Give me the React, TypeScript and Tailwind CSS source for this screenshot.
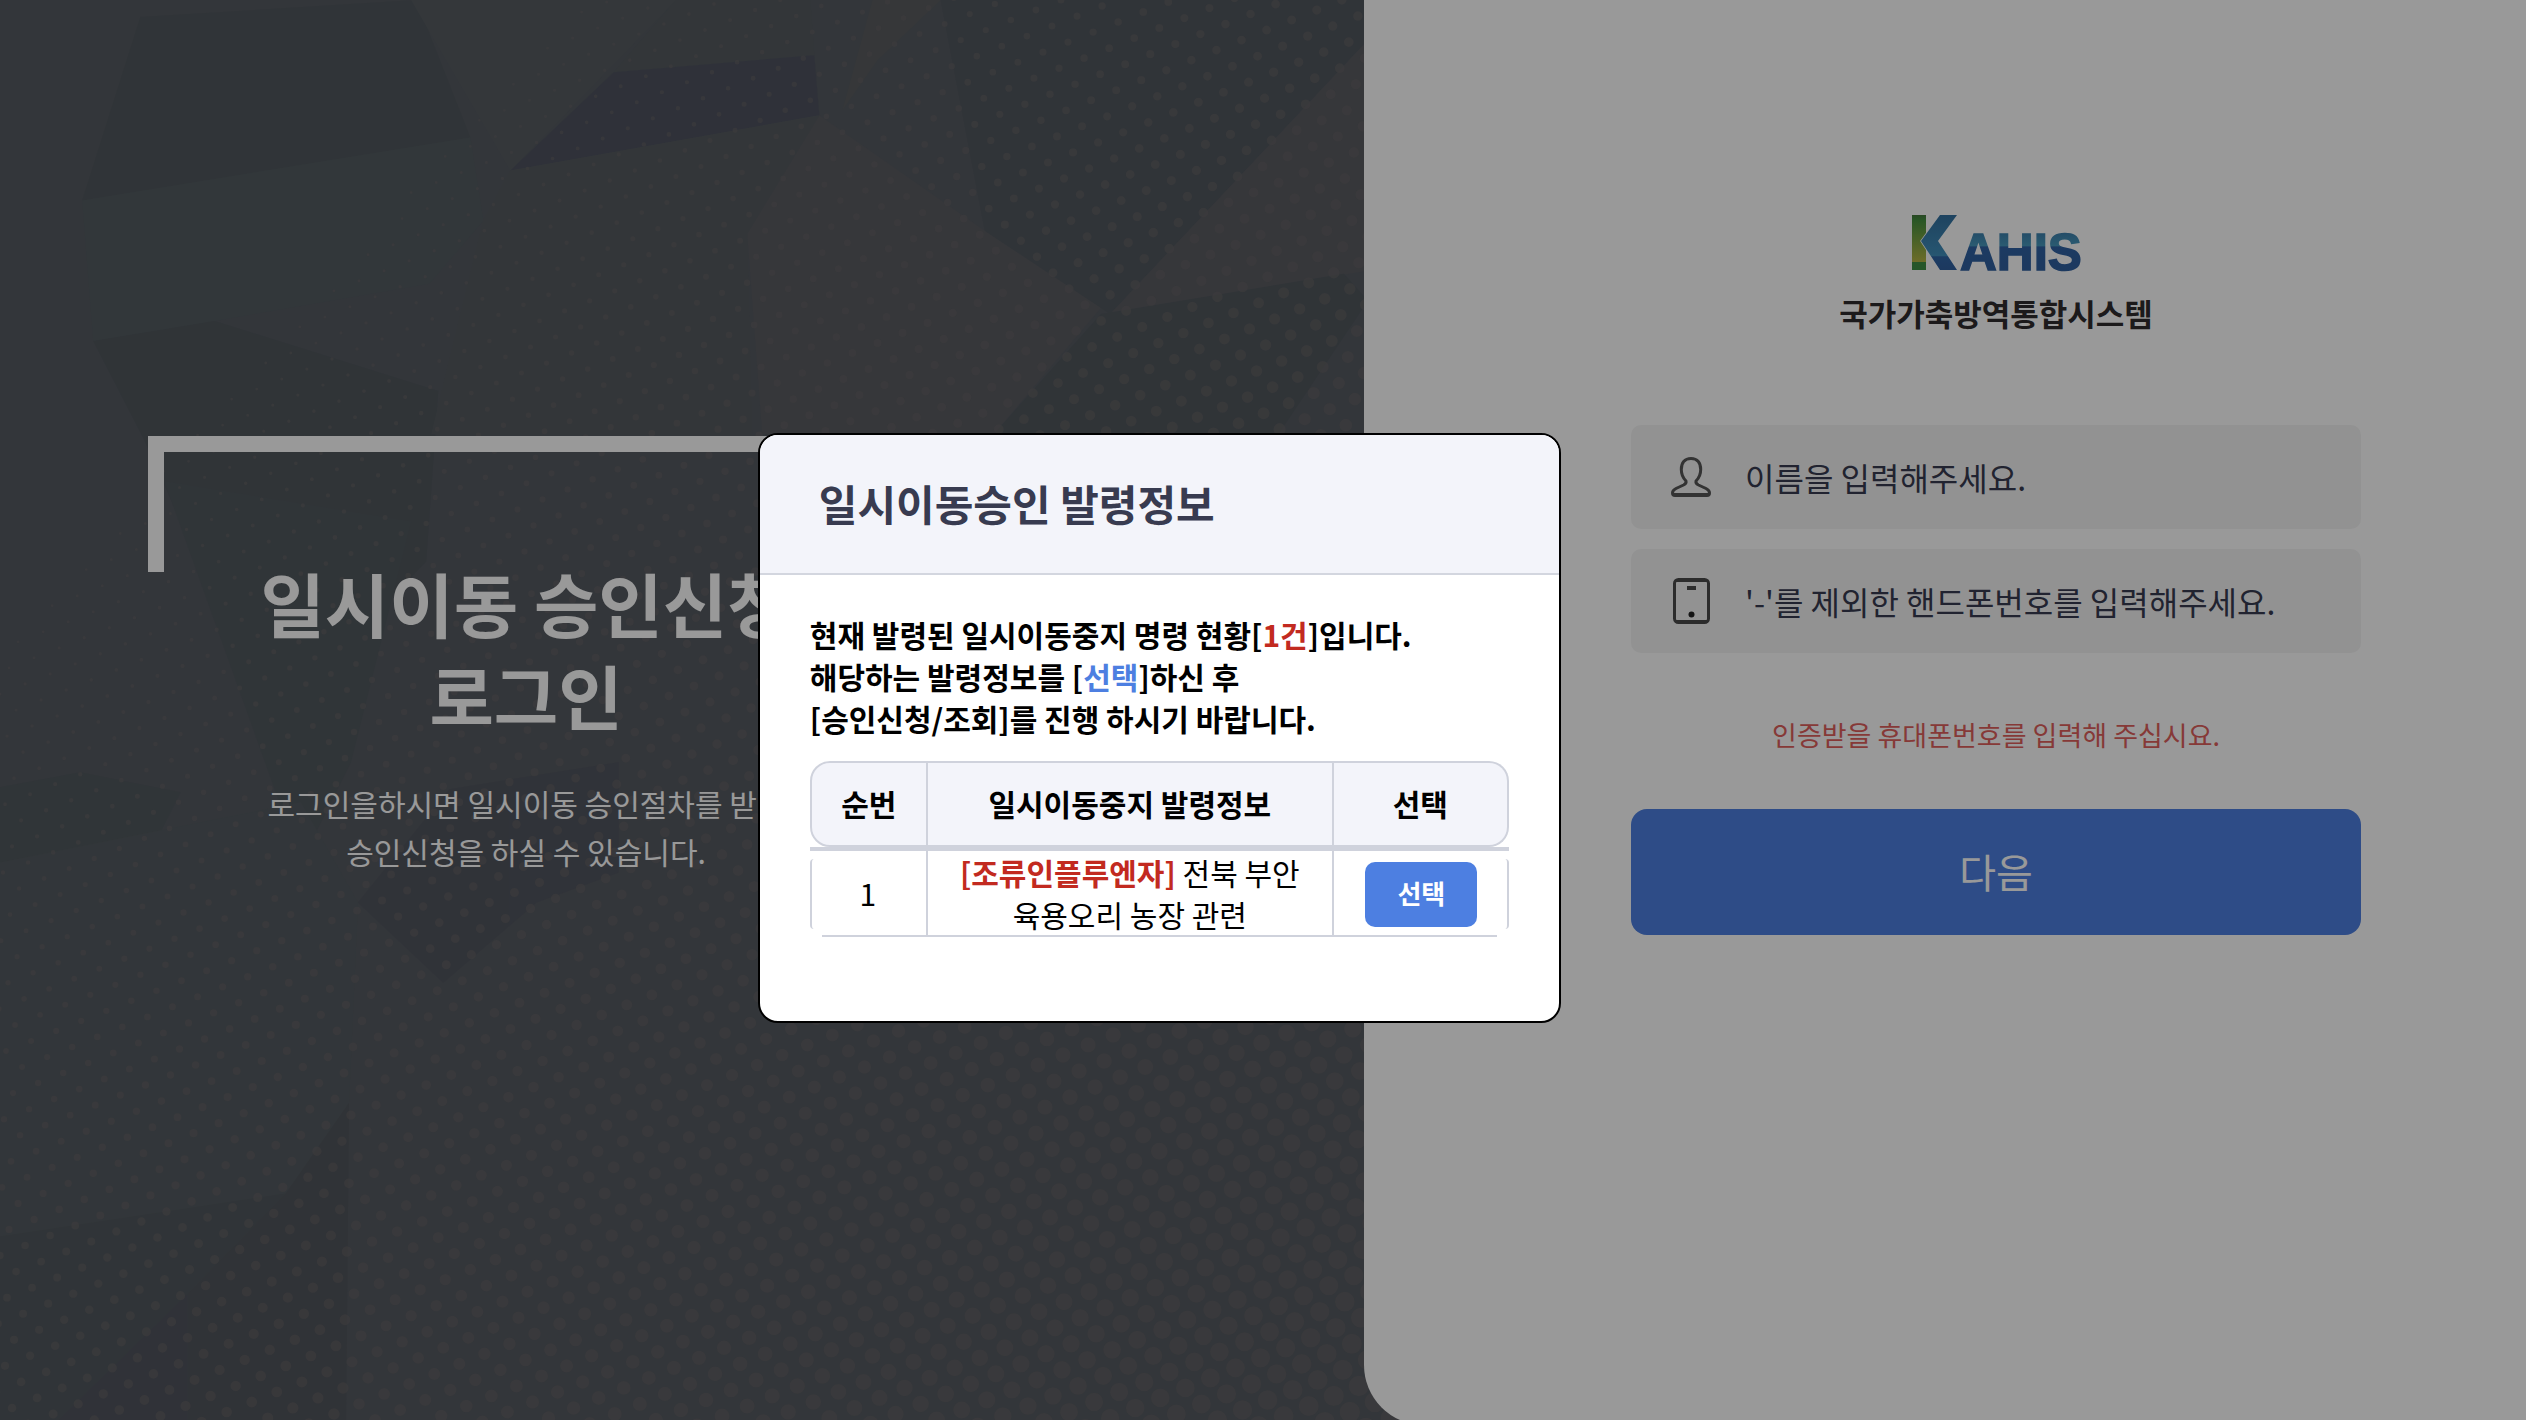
import { useState } from 'react'

const facets = [
  { points: '140,17 415,0 469,137 82,200', fill: '#50585d' },
  { points: '82,200 469,137 482,220 428,283 214,320 93,340', fill: '#545e62' },
  { points: '410,0 674,0 509,170', fill: '#595f63' },
  { points: '674,0 808,0 812,55 612,72', fill: '#555b60' },
  { points: '612,72 812,55 817,115 509,170', fill: '#4d5160' },
  { points: '93,340 214,320 437,390 425,560 270,720 143,437', fill: '#4e575c' },
  { points: '817,115 982,230 1098,307 991,433 760,433 745,233', fill: '#5d5d62' },
  { points: '509,170 817,115 745,233 750,433 430,433 482,220', fill: '#575c60' },
  { points: '870,0 938,0 875,60 840,110', fill: '#5d5e60' },
  { points: '938,0 1364,0 1364,40 1107,313 982,230', fill: '#4f575d' },
  { points: '1364,40 1364,270 1107,313', fill: '#5d5d62' },
  { points: '1098,313 1340,273 1364,300 1270,440 991,433', fill: '#4e565c' },
  { points: '164,480 410,520 350,760 300,860', fill: '#50595e' },
  { points: '0,785 80,770 180,790 160,830 0,860', fill: '#50595d' },
  { points: '448,787 617,760 617,870 535,900 442,980 357,900', fill: '#50535e' },
  { points: '0,860 300,800 357,900 348,1100 285,1190 0,1233', fill: '#545c61' },
  { points: '348,1100 345,1420 187,1420 187,1290 285,1190', fill: '#50545a' },
  { points: '0,1233 285,1190 187,1290 54,1420 0,1420', fill: '#50585d' },
  { points: '54,1420 187,1290 187,1420', fill: '#4f525e' },
]

// halftone lattice, dots grow towards the bottom right
function buildDots() {
  const dots: string[] = []
  for (let i = -110; i <= 110; i++) {
    for (let j = -110; j <= 110; j++) {
      const x = Math.round(1357 - 25 * i + 16 * j)
      const y = Math.round(1314 + 10 * i + 16 * j)
      if (x < -10 || x > 1420 || y < -10 || y > 1430) continue
      const r = Math.round((x * 0.0044 + y * 0.0039 - 1.2) * 10) / 10
      if (r < 1.4) continue
      dots.push(`M${x - r} ${y}a${r} ${r} 0 1 0 ${r * 2} 0a${r} ${r} 0 1 0 ${-r * 2} 0`)
    }
  }
  return dots.join('')
}

const dotPath = buildDots()

const notices = [{ id: 1, disease: '[조류인플루엔자]', area: ' 전북 부안', detail: '육용오리 농장 관련' }]

function Backdrop() {
  return (
    <svg
      className="absolute inset-0 h-full w-full"
      viewBox="0 0 1420 1420"
      preserveAspectRatio="xMinYMin slice"
      aria-hidden="true"
    >
      <g opacity="0.7">
        {facets.map((facet) => (
          <polygon key={facet.points} points={facet.points} fill={facet.fill} />
        ))}
      </g>
      <path d={dotPath} fill="#646365" fillOpacity="0.7" />
    </svg>
  )
}

function Logo() {
  return (
    <svg className="h-14 w-[178px] overflow-visible" viewBox="-4 0 178 56" role="img" aria-label="KAHIS">
      <defs>
        <linearGradient id="leaf" x1="0" y1="0" x2="0" y2="1">
          <stop offset="0" stopColor="#45793d" />
          <stop offset="0.1" stopColor="#45913f" />
          <stop offset="0.85" stopColor="#b5b545" />
          <stop offset="0.86" stopColor="#3f8f45" />
          <stop offset="1" stopColor="#3f8f45" />
        </linearGradient>
        <linearGradient id="wave" x1="0" y1="0" x2="0" y2="1">
          <stop offset="0" stopColor="#33709f" />
          <stop offset="0.74" stopColor="#4190bd" />
          <stop offset="0.76" stopColor="#2f65a6" />
          <stop offset="1" stopColor="#2f5f9f" />
        </linearGradient>
        <linearGradient id="sky" gradientUnits="userSpaceOnUse" x1="0" y1="18" x2="0" y2="55">
          <stop offset="0" stopColor="#3d80ad" />
          <stop offset="0.34" stopColor="#4798bd" />
          <stop offset="0.38" stopColor="#2f62a3" />
          <stop offset="1" stopColor="#2f5f9f" />
        </linearGradient>
      </defs>
      <rect x="1" y="0" width="14" height="55" fill="url(#leaf)" />
      <path d="M29 0H46L27 26L46 55H29L10 26Z" fill="url(#wave)" stroke="#ffffff" strokeWidth="1.5" paintOrder="stroke" />
      <text
        x="49"
        y="55"
        className="font-['Liberation_Sans',sans-serif] text-[51px] font-bold"
        fill="url(#sky)"
        stroke="url(#sky)"
        strokeWidth="1.5"
      >
        AHIS
      </text>
    </svg>
  )
}

function UserIcon() {
  return (
    <svg className="size-10" viewBox="0 0 40 40" fill="none" stroke="#555" strokeWidth="3" strokeLinejoin="round">
      <path d="M20 1.5C13.500 1.500 10.300 6 10.300 12.500C10.300 18 12.500 21.500 15 24C15.500 26 14.500 27 12.500 28L5 31.500C2.500 32.800 1.500 34 1.500 36C1.500 37.700 2.300 38.500 4 38.500H36C37.700 38.500 38.500 37.700 38.500 36C38.500 34 37.500 32.800 35 31.500L27.500 28C25.500 27 24.500 26 25 24C27.500 21.500 29.700 18 29.700 12.500C29.700 6 26.500 1.500 20 1.500Z" />
      <path d="M3 37.500H37" />
    </svg>
  )
}

function PhoneIcon() {
  return (
    <svg className="h-[46px] w-10" viewBox="0 0 40 46" fill="none" stroke="#4a4a4a" strokeWidth="3">
      <rect x="3.500" y="1.500" width="34" height="43" rx="4" />
      <path d="M5 43.500H36M5 2.500H36" />
      <path d="M16 10H25" strokeWidth="4" />
      <circle cx="20.500" cy="36.500" r="3" fill="#222" stroke="none" />
    </svg>
  )
}

export default function App() {
  const [name, setName] = useState('')
  const [phone, setPhone] = useState('')

  return (
    <div className="relative h-screen overflow-hidden bg-[#555a61] font-['Noto_Sans_CJK_KR',sans-serif]">
      <main className="flex h-full">
        <section className="relative w-[54%] shrink-0 pt-[436px] pl-[148px] text-white">
          <div className="absolute inset-y-0 left-0 w-[calc(100%+60px)] overflow-hidden">
            <Backdrop />
          </div>
          <div className="relative w-[756px] pt-[121px] text-center">
            <span className="absolute inset-x-0 top-0 h-[136px] border-x-16 border-t-16 border-white" />
            <h1 className="relative text-[70px] leading-[92px] font-bold">
              일시이동 승인신청
              <br />
              로그인
            </h1>
            <p className="relative mt-[38px] text-[30px] leading-[48px]">
              로그인을하시면 일시이동 승인절차를 받아
              <br />
              승인신청을 하실 수 있습니다.
            </p>
          </div>
        </section>

        <section className="relative h-[calc(100%+5px)] grow rounded-bl-[60px] bg-white pt-[215px] pl-[267px]">
          <form className="flex w-[730px] flex-col" onSubmit={(e) => e.preventDefault()}>
            <div className="flex flex-col items-center">
              <Logo />
              <p className="mt-[22px] text-[31px] leading-10 font-bold text-[#2f2c2e]">국가가축방역통합시스템</p>
            </div>

            <div className="mt-[92px] flex h-[104px] items-center rounded-[10px] bg-[#f4f4f4] pl-10">
              <label htmlFor="name" aria-label="이름">
                <UserIcon />
              </label>
              <input
                id="name"
                type="text"
                value={name}
                onChange={(e) => setName(e.target.value)}
                placeholder="이름을 입력해주세요."
                className="ml-[34px] h-full grow bg-transparent text-[32px] text-[#383b50] outline-none placeholder:text-[#383b50]"
              />
            </div>
            <div className="mt-5 flex h-[104px] items-center rounded-[10px] bg-[#f4f4f4] pl-10">
              <label htmlFor="phone" aria-label="핸드폰번호">
                <PhoneIcon />
              </label>
              <input
                id="phone"
                type="tel"
                value={phone}
                onChange={(e) => setPhone(e.target.value)}
                placeholder="'-'를 제외한 핸드폰번호를 입력해주세요."
                className="ml-[34px] h-full grow bg-transparent text-[32px] text-[#383b50] outline-none placeholder:text-[#383b50]"
              />
            </div>

            <p className="mt-[62px] text-center text-[27px] leading-10 text-[#e0605c]">
              인증받을 휴대폰번호를 입력해 주십시요.
            </p>

            <button type="submit" className="mt-[54px] h-[126px] rounded-2xl bg-[#4d7fe1] pb-0.5 text-[40px] text-white">
              다음
            </button>
          </form>
        </section>
      </main>

      <div className="absolute inset-0 bg-black/40" />

      <div
        role="dialog"
        aria-labelledby="notice-title"
        className="absolute top-[433px] left-[30%] w-[803px] overflow-hidden rounded-[20px] border-2 border-black bg-white text-black"
      >
        <header className="flex h-[140px] items-center border-b-2 border-[#d3d6df] bg-[#f3f4fa] pb-1 pl-[59px]">
          <h2 id="notice-title" className="text-[42px] font-bold text-[#383b50]">
            일시이동승인 발령정보
          </h2>
        </header>

        <div className="px-[50px] pt-[38px] pb-[84px]">
          <p className="text-[30px] leading-[42px] font-bold">
            현재 발령된 일시이동중지 명령 현황[<span className="text-[#c22a20]">1건</span>]입니다.
            <br />
            해당하는 발령정보를 [<span className="text-[#4d7fe1]">선택</span>]하신 후
            <br />
            [승인신청/조회]를 진행 하시기 바랍니다.
          </p>

          <table className="mt-[22px] w-full table-fixed border-separate border-spacing-0 text-center text-[30px] leading-[42px]">
            <thead>
              <tr className="h-[86px]">
                <th className="w-[118px] rounded-l-[20px] border-2 border-[#cfd2dc] bg-[#f3f4fa] pb-0.5">순번</th>
                <th className="border-y-2 border-r-2 border-[#cfd2dc] bg-[#f3f4fa] pb-0.5">일시이동중지 발령정보</th>
                <th className="w-[175px] rounded-r-[20px] border-y-2 border-r-2 border-[#cfd2dc] bg-[#f3f4fa] pb-0.5">선택</th>
              </tr>
            </thead>
            <tbody>
              {notices.map((notice) => (
                <tr key={notice.id} className="h-[90px]">
                  <td className="relative border-t-4 border-r-2 border-[#cfd2dc] p-0 pb-0.5 before:absolute before:inset-y-2 before:left-0 before:w-1 before:rounded-l-full before:border-l-2 before:border-[#cfd2dc] after:absolute after:right-0 after:bottom-0 after:left-3 after:h-0.5 after:bg-[#cfd2dc]">
                    {notice.id}
                  </td>
                  <td className="border-t-4 border-r-2 border-b-2 border-[#cfd2dc] p-0 align-top">
                    <strong className="font-bold text-[#c22a20]">{notice.disease}</strong>
                    {notice.area}
                    <br />
                    {notice.detail}
                  </td>
                  <td className="relative border-t-4 border-[#cfd2dc] p-0 before:absolute before:inset-y-2 before:right-0 before:w-1 before:rounded-r-full before:border-r-2 before:border-[#cfd2dc] after:absolute after:right-3 after:bottom-0 after:left-0 after:h-0.5 after:bg-[#cfd2dc]">
                    <button
                      type="button"
                      className="mx-auto block h-[65px] w-28 rounded-[10px] bg-[#4d7fe1] pb-0.5 text-[26px] font-bold text-white"
                    >
                      선택
                    </button>
                  </td>
                </tr>
              ))}
            </tbody>
          </table>
        </div>
      </div>
    </div>
  )
}
